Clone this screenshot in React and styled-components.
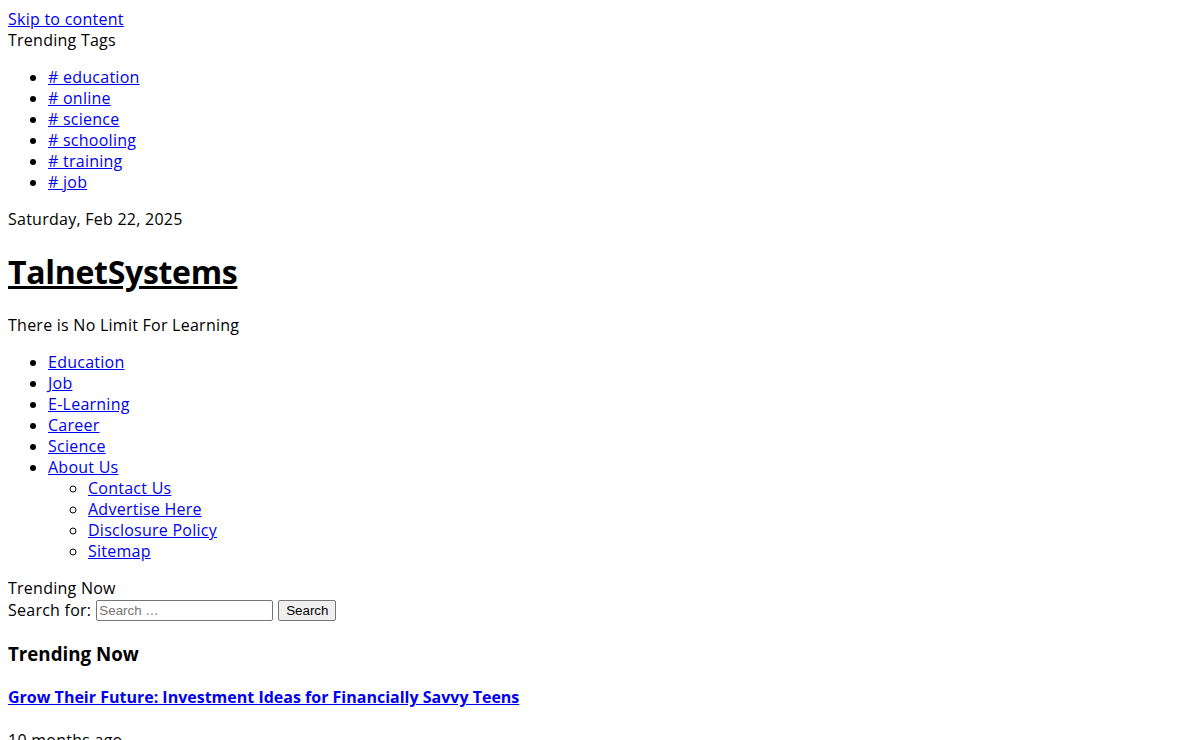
import React from 'react'
import styled, { createGlobalStyle } from 'styled-components'

const GlobalStyle = createGlobalStyle`
  body {
    margin: 8px;
    padding-top: 1px;
    font-family: "Open Sans", "Noto Sans", sans-serif;
    font-size: 16px;
    line-height: 21px;
    letter-spacing: 0.25px;
    color: #000;
    background: #fff;
  }
`

const A = styled.a`
  color: #0000ee;
  text-decoration: underline;
`

const Label = styled.div``

const List = styled.ul`
  margin: ${(p) => (p.nested ? '0' : '16px 0')};
  padding-left: 40px;
  list-style-type: ${(p) => (p.nested ? 'circle' : 'disc')};
`

const DateLine = styled.p`
  margin: 16px 0;
`

const SiteTitle = styled.h1`
  margin: 21.44px 0;
  font-size: 32px;
  line-height: 42.6px;
  font-weight: bold;
  letter-spacing: -0.3px;

  a {
    color: #000;
  }
`

const Tagline = styled.p`
  margin: 16px 0;
`

const SearchForm = styled.form`
  display: flex;
  align-items: center;
  gap: 5px;
  height: 23px;
`

const SearchInput = styled.input`
  box-sizing: border-box;
  width: 177px;
  height: 21px;
  padding: 1px 2px;
  border: 1px solid #767676;
  border-radius: 2px;
  font: 13.33px "Liberation Sans", Arial, sans-serif;
  letter-spacing: 0;

  &::placeholder {
    color: #757575;
  }
`

const SearchButton = styled.button`
  box-sizing: border-box;
  height: 21px;
  width: 58px;
  padding: 1px 6px;
  border: 1px solid #767676;
  border-radius: 2px;
  background: #efefef;
  font: 13.33px "Liberation Sans", Arial, sans-serif;
  letter-spacing: 0;
  color: #000;
`

const SectionTitle = styled.h3`
  margin: 18.72px 0;
  font-size: 18.72px;
  line-height: 25px;
  font-weight: bold;
  letter-spacing: 0;
`

const PostTitle = styled.h4`
  margin: 21.28px 0;
  font-size: 16px;
  line-height: 21px;
  font-weight: bold;
  letter-spacing: 0;
`

const PostMeta = styled.p`
  margin: 21.28px 0 16px;
`

const tags = ['education', 'online', 'science', 'schooling', 'training', 'job']
const menu = ['Education', 'Job', 'E-Learning', 'Career', 'Science']
const about = ['Contact Us', 'Advertise Here', 'Disclosure Policy', 'Sitemap']

export default function App() {
  return (
    <>
      <GlobalStyle />
      <A href="#content">Skip to content</A>
      <Label>Trending Tags</Label>
      <List>
        {tags.map((t) => (
          <li key={t}>
            <A href="#">{'# ' + t}</A>
          </li>
        ))}
      </List>
      <DateLine>Saturday, Feb 22, 2025</DateLine>
      <SiteTitle>
        <A href="#">TalnetSystems</A>
      </SiteTitle>
      <Tagline>There is No Limit For Learning</Tagline>
      <List>
        {menu.map((m) => (
          <li key={m}>
            <A href="#">{m}</A>
          </li>
        ))}
        <li>
          <A href="#">About Us</A>
          <List nested>
            {about.map((m) => (
              <li key={m}>
                <A href="#">{m}</A>
              </li>
            ))}
          </List>
        </li>
      </List>
      <Label>Trending Now</Label>
      <SearchForm onSubmit={(e) => e.preventDefault()}>
        <label>Search for:</label>
        <SearchInput type="search" placeholder="Search …" />
        <SearchButton type="submit">Search</SearchButton>
      </SearchForm>
      <SectionTitle>Trending Now</SectionTitle>
      <PostTitle>
        <A href="#">Grow Their Future: Investment Ideas for Financially Savvy Teens</A>
      </PostTitle>
      <PostMeta>10 months ago</PostMeta>
    </>
  )
}
